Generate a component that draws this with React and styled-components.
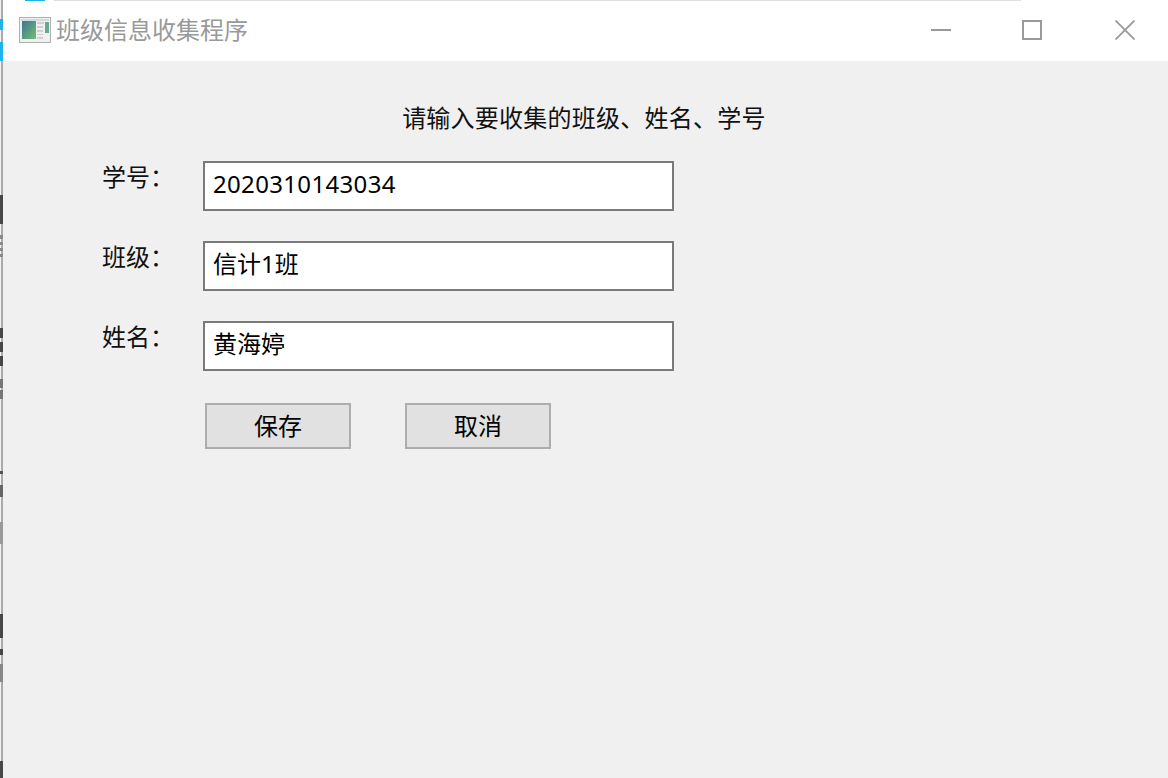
import styled, { createGlobalStyle } from "styled-components";

const GlobalStyle = createGlobalStyle`
  html, body {
    margin: 0;
    padding: 0;
    background: #f0f0f0;
  }
  body {
    font-family: "Noto Sans", "Noto Sans CJK SC", sans-serif;
  }
`;

// bits of the window behind, visible along the left edge: [gap above, height, colour]
const edgeBits = [
  [19, 11, "#1cb4ec"],
  [12, 19, "#1cb4ec"],
  [134, 29, "#474747"],
  [11, 4, "#8a8a8a"],
  [3, 3, "#8a8a8a"],
  [3, 3, "#8a8a8a"],
  [3, 3, "#8a8a8a"],
  [71, 10, "#474747"],
  [4, 10, "#474747"],
  [4, 10, "#474747"],
  [13, 9, "#777777"],
  [2, 9, "#777777"],
  [72, 3, "#555555"],
  [11, 12, "#666666"],
  [25, 22, "#999999"],
  [70, 24, "#474747"],
  [11, 6, "#474747"],
  [9, 18, "#888888"],
  [79, 19, "#474747"],
];

const labels = [
  { name: "学号：", value: "2020310143034", spaced: true },
  { name: "班级：", value: "信计1班" },
  { name: "姓名：", value: "黄海婷" },
];

function AppIcon() {
  return (
    <svg width="32" height="26" viewBox="0 0 32 26">
      <defs>
        <linearGradient id="pane" x1="0" y1="0" x2="1" y2="1">
          <stop offset="0" stopColor="#3f7596" />
          <stop offset="1" stopColor="#74bd74" />
        </linearGradient>
      </defs>
      <rect x="0.5" y="0.5" width="31" height="25" fill="#f0f0f0" stroke="#b0b0b0" />
      <rect x="2" y="2" width="28" height="2" fill="#d3dae0" />
      <rect x="3" y="4" width="14" height="18" fill="url(#pane)" />
      <rect x="18" y="5" width="7" height="2" fill="#cfcfcf" />
      <rect x="18" y="9" width="6" height="2" fill="#cfcfcf" />
      <rect x="18" y="13" width="6" height="2" fill="#cfcfcf" />
      <rect x="18" y="17" width="6" height="1" fill="#cfcfcf" />
      <rect x="18" y="20" width="6" height="2" fill="#cfcfcf" />
      <rect x="26" y="5" width="4" height="11" fill="#67a88f" />
    </svg>
  );
}

function MinimizeIcon() {
  return (
    <svg width="20" height="20" viewBox="0 0 20 20">
      <path d="M0 10h20" stroke="#999" strokeWidth="2" fill="none" />
    </svg>
  );
}

function MaximizeIcon() {
  return (
    <svg width="20" height="20" viewBox="0 0 20 20">
      <rect x="1" y="1" width="18" height="18" stroke="#999" strokeWidth="2" fill="none" />
    </svg>
  );
}

function CloseIcon() {
  return (
    <svg width="20" height="20" viewBox="0 0 20 20">
      <path d="M0.5 0.5l19 19M19.5 0.5l-19 19" stroke="#999" strokeWidth="1.8" fill="none" />
    </svg>
  );
}

export default function App() {
  return (
    <Page>
      <GlobalStyle />
      <LeftEdge>
        {edgeBits.map(([gap, height, color], i) => (
          <EdgeBit key={i} $gap={gap} $height={height} $color={color} />
        ))}
      </LeftEdge>
      <Window>
        <TopEdge>
          <TopBit $width={20} $gap={22} $color="#1cb4ec" />
          <TopBit $width={967} $gap={9} $color="#e0e0e0" />
        </TopEdge>
        <TitleBar>
          <AppIcon />
          <Title>班级信息收集程序</Title>
          <Captions>
            <MinimizeIcon />
            <MaximizeIcon />
            <CloseSlot>
              <CloseIcon />
            </CloseSlot>
          </Captions>
        </TitleBar>
        <Body>
          <Heading>请输入要收集的班级、姓名、学号</Heading>
          <Form>
            {labels.map((row) => (
              <Row key={row.name}>
                <Label>{row.name}</Label>
                <Field $spaced={row.spaced}>{row.value}</Field>
              </Row>
            ))}
            <Buttons>
              <Button>保存</Button>
              <Button>取消</Button>
            </Buttons>
          </Form>
        </Body>
      </Window>
    </Page>
  );
}

const Page = styled.div`
  display: flex;
  width: 1168px;
  height: 778px;
  overflow: hidden;
`;

const LeftEdge = styled.div`
  display: flex;
  flex-direction: column;
  flex: none;
  width: 2px;
  height: 100%;
  background: #aaaaaa;
  border-left: 1px solid #f2f2f2;
`;

const EdgeBit = styled.div`
  flex: none;
  width: 3px;
  margin-left: -1px;
  margin-top: ${(p) => p.$gap}px;
  height: ${(p) => p.$height}px;
  background: ${(p) => p.$color};
`;

const Window = styled.div`
  display: flex;
  flex-direction: column;
  flex: 1;
  min-width: 0;
`;

const TopEdge = styled.div`
  display: flex;
  flex: none;
  height: 1px;
  background: #ffffff;
`;

const TopBit = styled.div`
  flex: none;
  width: ${(p) => p.$width}px;
  margin-left: ${(p) => p.$gap}px;
  background: ${(p) => p.$color};
`;

const TitleBar = styled.div`
  display: flex;
  align-items: center;
  flex: none;
  height: 60px;
  padding: 0 33px 2px 16px;
  box-sizing: border-box;
  background: #ffffff;
`;

const Title = styled.div`
  margin-left: 5px;
  font-size: 24px;
  line-height: 32px;
  color: #999999;
`;

const Captions = styled.div`
  display: flex;
  align-items: center;
  gap: 71px;
  margin-left: auto;
`;

const CloseSlot = styled.div`
  display: flex;
  margin-left: 2px;
`;

const Body = styled.div`
  flex: 1;
  background: #f0f0f0;
  padding-top: 41px;
`;

const Heading = styled.div`
  padding-right: 3px;
  font-size: 24px;
  line-height: 32px;
  letter-spacing: 0.25px;
  text-align: center;
  color: #111111;
`;

const Form = styled.div`
  display: flex;
  flex-direction: column;
  gap: 30px;
  margin-top: 27px;
  padding-left: 99px;
`;

const Row = styled.div`
  display: grid;
  grid-template-columns: 101px 471px;
`;

const Label = styled.div`
  font-size: 24px;
  line-height: 32px;
  color: #111111;
`;

const Field = styled.div`
  box-sizing: border-box;
  height: 50px;
  padding-left: 8px;
  border: 2px solid #7a7a7a;
  background: #ffffff;
  font-size: 24px;
  line-height: 42px;
  letter-spacing: ${(p) => (p.$spaced ? "0.33px" : "0")};
  color: #000000;
`;

const Buttons = styled.div`
  display: flex;
  gap: 54px;
  margin-top: 2px;
  padding-left: 103px;
`;

const Button = styled.div`
  box-sizing: border-box;
  display: flex;
  align-items: center;
  justify-content: center;
  width: 146px;
  height: 46px;
  padding-bottom: 4px;
  border: 2px solid #adadad;
  background: #e1e1e1;
  font-size: 24px;
  color: #000000;
`;
